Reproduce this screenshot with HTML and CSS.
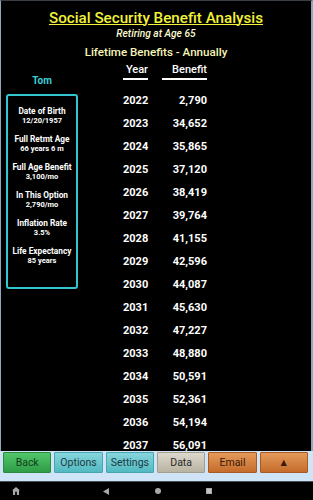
FILE: index.html
```html
<!DOCTYPE html>
<html>
<head>
<meta charset="utf-8">
<link rel="stylesheet" href="styles.css">
</head>
<body>
<div class="screen">
  <div class="main">
    <header class="head">
      <h1 class="title">Social Security Benefit Analysis</h1>
      <div class="subtitle">Retiring at Age 65</div>
      <div class="section">Lifetime Benefits - Annually</div>
    </header>
    <div class="content">
      <aside class="side">
        <div class="name">Tom</div>
        <div class="card">
          <div class="item"><div class="label">Date of Birth</div><div class="value">12/20/1957</div></div>
          <div class="item"><div class="label">Full Retmt Age</div><div class="value">66 years 6 m</div></div>
          <div class="item"><div class="label">Full Age Benefit</div><div class="value">3,100/mo</div></div>
          <div class="item"><div class="label">In This Option</div><div class="value">2,790/mo</div></div>
          <div class="item"><div class="label">Inflation Rate</div><div class="value">3.5%</div></div>
          <div class="item"><div class="label">Life Expectancy</div><div class="value">85 years</div></div>
        </div>
      </aside>
      <div class="table">
        <div class="row hrow"><span class="year th">Year</span><span class="benefit th">Benefit</span></div>
        <div class="row"><span class="year">2022</span><span class="benefit">2,790</span></div>
        <div class="row"><span class="year">2023</span><span class="benefit">34,652</span></div>
        <div class="row"><span class="year">2024</span><span class="benefit">35,865</span></div>
        <div class="row"><span class="year">2025</span><span class="benefit">37,120</span></div>
        <div class="row"><span class="year">2026</span><span class="benefit">38,419</span></div>
        <div class="row"><span class="year">2027</span><span class="benefit">39,764</span></div>
        <div class="row"><span class="year">2028</span><span class="benefit">41,155</span></div>
        <div class="row"><span class="year">2029</span><span class="benefit">42,596</span></div>
        <div class="row"><span class="year">2030</span><span class="benefit">44,087</span></div>
        <div class="row"><span class="year">2031</span><span class="benefit">45,630</span></div>
        <div class="row"><span class="year">2032</span><span class="benefit">47,227</span></div>
        <div class="row"><span class="year">2033</span><span class="benefit">48,880</span></div>
        <div class="row"><span class="year">2034</span><span class="benefit">50,591</span></div>
        <div class="row"><span class="year">2035</span><span class="benefit">52,361</span></div>
        <div class="row"><span class="year">2036</span><span class="benefit">54,194</span></div>
        <div class="row"><span class="year">2037</span><span class="benefit">56,091</span></div>
      </div>
    </div>
  </div>
  <div class="toolbar">
    <div class="btn btn-green">Back</div>
    <div class="btn btn-teal">Options</div>
    <div class="btn btn-teal">Settings</div>
    <div class="btn btn-grey">Data</div>
    <div class="btn btn-orange">Email</div>
    <div class="btn btn-orange">&#9650;</div>
  </div>
  <div class="navbar">
    <svg class="nav-home" width="8" height="8" viewBox="0 0 8 8"><path d="M4 0 L8 3.4 L7 3.4 L7 8 L1 8 L1 3.4 L0 3.4 Z" fill="#a8a8a8"/><path d="M3 8 L3 5.6 A1 1 0 0 1 5 5.6 L5 8 Z" fill="#111"/></svg>
    <svg class="nav-back" width="6" height="7" viewBox="0 0 6 7"><path d="M6 0 L6 7 L0 3.5 Z" fill="#a8a8a8"/></svg>
    <svg class="nav-circle" width="6" height="6" viewBox="0 0 6 6"><circle cx="3" cy="3" r="3" fill="#a8a8a8"/></svg>
    <svg class="nav-square" width="6" height="6" viewBox="0 0 6 6"><rect x="0" y="0" width="6" height="6" fill="#a8a8a8"/><rect x="1" y="1" width="4" height="4" fill="#c4c4c4"/></svg>
  </div>
</div>
</body>
</html>
```

FILE: styles.css
```css
html, body {
  margin: 0;
  padding: 0;
  background: #000;
}

body {
  font-family: Roboto, "Noto Sans", "Liberation Sans", sans-serif;
}

.screen {
  width: 313px;
  height: 500px;
  display: flex;
  flex-direction: column;
  overflow: hidden;
}

.main {
  height: 451px;
  box-sizing: border-box;
  overflow: hidden;
  background: #000;
  border-left: 1px solid #8ea6bf;
  border-right: 2px solid #8ea6bf;
  border-top: 1px solid #3a3f46;
}

.head {
  padding-top: 7.5px;
  text-align: center;
}

.title {
  margin: 0;
  font-weight: 500;
  font-size: 15.2px;
  line-height: 18px;
  color: #f2f23a;
  text-decoration: underline;
  text-decoration-thickness: 1px;
  text-underline-offset: 1px;
}

.subtitle {
  margin-top: 1px;
  font-style: italic;
  font-weight: 500;
  font-size: 10.2px;
  line-height: 12px;
  color: #fbfbd0;
}

.section {
  margin-top: 5px;
  font-weight: 500;
  font-size: 11.6px;
  line-height: 15px;
  color: #f6f6b4;
}

.content {
  display: flex;
  align-items: flex-start;
}

.side {
  width: 72px;
  margin-left: 5px;
  padding-top: 15px;
}

.name {
  text-align: center;
  font-weight: 700;
  font-size: 10px;
  line-height: 12px;
  color: #3ccfd6;
  margin-bottom: 7.5px;
}

.card {
  height: 195px;
  box-sizing: border-box;
  border: 2px solid #33c6cf;
  border-radius: 3px;
  padding-top: 10px;
  text-align: center;
  color: #fff;
}

.item + .item {
  margin-top: 8px;
}

.label {
  font-weight: 700;
  font-size: 8.3px;
  line-height: 10px;
}

.value {
  font-weight: 700;
  font-size: 7.5px;
  line-height: 10px;
}

.table {
  margin-left: 45px;
  margin-top: 3.5px;
  color: #fff;
}

.row {
  display: flex;
  gap: 14px;
  height: 23px;
  line-height: 23px;
  font-weight: 700;
  font-size: 11px;
}

.year {
  width: 25px;
  text-align: right;
}

.benefit {
  width: 45px;
  text-align: right;
}

.hrow {
  height: auto;
  margin-bottom: 9px;
}

.th {
  font-weight: 500;
  font-size: 11px;
  line-height: 13px;
  padding-bottom: 2px;
  border-bottom: 2px solid #fff;
}

.toolbar {
  height: 30px;
  box-sizing: border-box;
  background: #cfe5f7;
  display: flex;
  gap: 3px;
  padding: 1px 5px 8px 3px;
}

.btn {
  flex: 1;
  display: flex;
  align-items: center;
  justify-content: center;
  font-size: 10.5px;
  border-radius: 1px;
  box-sizing: border-box;
  border: 1px solid transparent;
}

.btn-green {
  background: linear-gradient(#52c66a, #2f9c47);
  border-color: #2b8a40;
  color: #123e1a;
}

.btn-teal {
  background: linear-gradient(#86d6dc, #52b9c1);
  border-color: #48a6ae;
  color: #1b3a44;
}

.btn-grey {
  background: linear-gradient(#dcd8cc, #b9b3a2);
  border-color: #a49e8e;
  color: #2a2a26;
}

.btn-orange {
  background: linear-gradient(#e59a5a, #c46c2c);
  border-color: #a85a22;
  color: #3a1806;
}

.navbar {
  flex: 1;
  background: #000;
  border-top: 1px solid #4a4f55;
  display: flex;
  align-items: center;
}

.nav-home { margin-left: 12px; }
.nav-back { margin-left: 83px; }
.nav-circle { margin-left: 46px; }
.nav-square { margin-left: 45px; }
```
